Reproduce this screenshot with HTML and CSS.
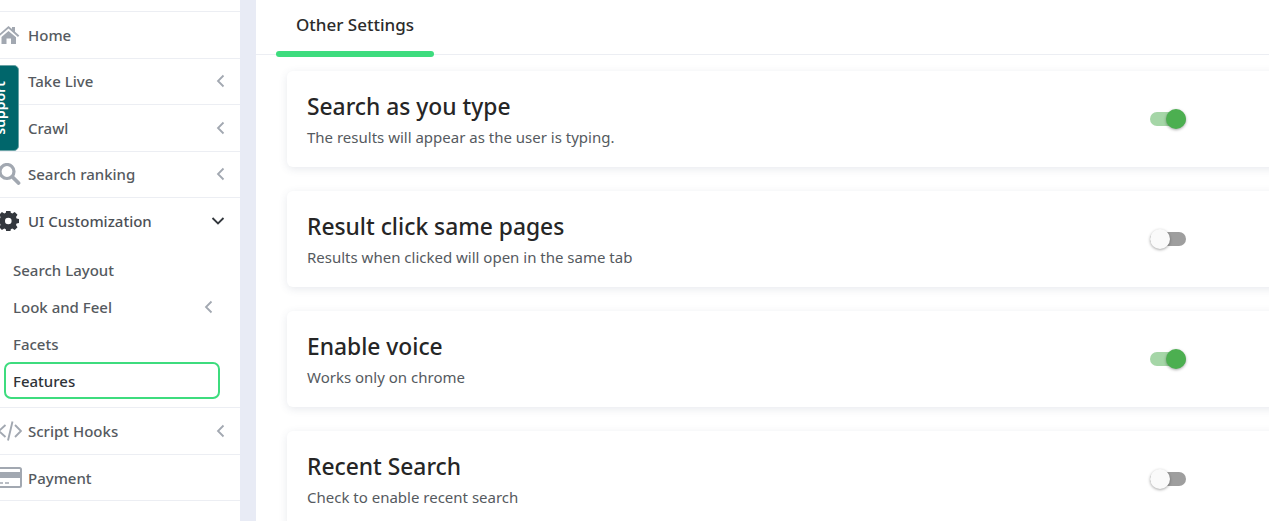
FILE: index.html
```html
<!DOCTYPE html>
<html lang="en">
<head>
<meta charset="utf-8">
<title>Other Settings</title>
<link rel="stylesheet" href="styles.css">
</head>
<body>
<div class="page">
  <aside class="sidebar">
    <a class="support"><span class="support-text">support</span></a>
    <ul class="nav">
      <li class="item"><span class="icon"><svg width="22" height="20" viewBox="0 0 22 20"><path fill="#a2a8b1" d="M-1 9.500 8.500 1 12 4V2h3v4.700l4.300 3.800-1.300 1.500-9.500-8.400L-.2 11zM1.500 12l7-6 7.500 6.300V19h-5v-5.500H6.500V19h-5z"/></svg></span><span class="label">Home</span></li>
      <li class="item"><span class="icon"></span><span class="label">Take Live</span><svg class="chev" width="10" height="14" viewBox="0 0 10 14"><path d="M7.500 1.500 2 7l5.500 5.500" fill="none" stroke="#a2a8b1" stroke-width="1.800"/></svg></li>
      <li class="item"><span class="icon"></span><span class="label">Crawl</span><svg class="chev" width="10" height="14" viewBox="0 0 10 14"><path d="M7.500 1.500 2 7l5.500 5.500" fill="none" stroke="#a2a8b1" stroke-width="1.800"/></svg></li>
      <li class="item"><span class="icon"><svg width="22" height="22" viewBox="0 0 22 22"><circle cx="7" cy="8.500" r="7" fill="none" stroke="#a2a8b1" stroke-width="3.200"/><path d="m12.500 14 6 6" stroke="#a2a8b1" stroke-width="3.800" stroke-linecap="round"/></svg></span><span class="label">Search ranking</span><svg class="chev" width="10" height="14" viewBox="0 0 10 14"><path d="M7.500 1.500 2 7l5.500 5.500" fill="none" stroke="#a2a8b1" stroke-width="1.800"/></svg></li>
      <li class="item open">
        <div class="head"><span class="icon"><svg width="22" height="20" viewBox="0 0 22 20"><path fill="#33373d" fill-rule="evenodd" d="M6.300 0h4l.5 2.800 1.500.6L14.700 2l2.800 2.800-1.500 2.300.6 1.400 2.400.5v4l-2.400.5-.6 1.400 1.500 2.300-2.800 2.800-2.400-1.400-1.500.6-.5 2.800h-4l-.5-2.800-1.500-.6-2.400 1.400-2.800-2.800 1.500-2.300-.6-1.400-2.400-.5v-4l2.400-.5.600-1.400-1.500-2.300L1.900 2l2.400 1.400 1.500-.6zM8.300 7.700a3.300 3.300 0 1 0 0 6.600 3.300 3.300 0 0 0 0-6.600z" transform="translate(0 -1)"/></svg></span><span class="label strong">UI Customization</span><svg class="chev" width="14" height="10" viewBox="0 0 14 10"><path d="M1.500 2 7 7.500 12.500 2" fill="none" stroke="#33373d" stroke-width="1.800"/></svg></div>
        <ul class="subnav">
          <li class="sub">Search Layout</li>
          <li class="sub">Look and Feel<svg class="subchev" width="10" height="14" viewBox="0 0 10 14"><path d="M7.500 1.500 2 7l5.500 5.500" fill="none" stroke="#a2a8b1" stroke-width="1.800"/></svg></li>
          <li class="sub">Facets</li>
          <li class="sub active">Features</li>
        </ul>
      </li>
      <li class="item"><span class="icon"><svg width="22" height="22" viewBox="0 0 22 22"><path d="M5.500 5-1 11l6.500 6M15 5l6 6-6 6M12.500 1.500 8 20.500" fill="none" stroke="#a2a8b1" stroke-width="1.900"/></svg></span><span class="label">Script Hooks</span><svg class="chev" width="10" height="14" viewBox="0 0 10 14"><path d="M7.500 1.500 2 7l5.500 5.500" fill="none" stroke="#a2a8b1" stroke-width="1.800"/></svg></li>
      <li class="item"><span class="icon"><svg width="22" height="21" viewBox="0 0 22 21"><rect x="-4" y="1" width="25" height="19" rx="1.500" fill="none" stroke="#a2a8b1" stroke-width="2"/><path d="M-3 5h23v6H-3z" fill="#a2a8b1"/><path d="M-1 16h4M5 16h4" stroke="#a2a8b1" stroke-width="1.500"/></svg></span><span class="label">Payment</span></li>
    </ul>
  </aside>
  <main class="main">
    <div class="tabs"><div class="tab">Other Settings</div></div>
    <div class="cards">
      <section class="card"><div class="text"><h2>Search as you type</h2><p>The results will appear as the user is typing.</p></div><div class="switch on"><span class="knob"></span></div></section>
      <section class="card"><div class="text"><h2>Result click same pages</h2><p>Results when clicked will open in the same tab</p></div><div class="switch"><span class="knob"></span></div></section>
      <section class="card"><div class="text"><h2>Enable voice</h2><p>Works only on chrome</p></div><div class="switch on"><span class="knob"></span></div></section>
      <section class="card"><div class="text"><h2>Recent Search</h2><p>Check to enable recent search</p></div><div class="switch"><span class="knob"></span></div></section>
    </div>
  </main>
</div>
</body>
</html>
```
FILE: styles.css
```css
* { box-sizing: border-box; }
html, body { margin: 0; height: 521px; overflow: hidden; }
body { font-family: "Noto Sans", "Open Sans", sans-serif; background: #e8ebf5; color: #2b2b2b; }
ul { list-style: none; margin: 0; padding: 0; }
.page { display: flex; gap: 16px; height: 521px; }
.sidebar { position: relative; width: 240px; flex: none; background: #fff; padding-top: 11px; overflow: hidden; }
.support { position: absolute; left: -17px; top: 65px; width: 36px; height: 86px; padding-right: 3px; display: flex; align-items: center; justify-content: center; background: #00666b; border: 1px solid #6aa3a6; border-radius: 5px; color: #fff; font-size: 14px; font-weight: 600; }
.support-text { writing-mode: vertical-rl; transform: rotate(180deg); line-height: 30px; }
.nav { border-top: 1px solid #eceef3; }
.item { display: flex; align-items: center; height: 46.550px; border-bottom: 1px solid #eceef3; padding-right: 14px; font-size: 15px; font-weight: 500; color: #555a60; }
.item.open { display: block; height: auto; padding-right: 0; padding-bottom: 8px; }
.head { display: flex; align-items: center; height: 46px; padding-right: 15px; }
.icon { width: 28px; flex: none; display: flex; align-items: center; }
.label { flex: 1; }
.strong { color: #4c5056; }
.subnav { padding: 7px 20px 0 4px; }
.sub { display: flex; align-items: center; justify-content: space-between; height: 37px; padding: 0 6px 0 9px; font-size: 15px; color: #555a60; }
.sub.active { border: 2px solid #3ddc7e; border-radius: 7px; color: #2f3338; padding-left: 7px; }
.main { flex: 1; min-width: 0; background: #fff; overflow: hidden; }
.tabs { height: 55px; border-bottom: 1px solid #eceef3; padding-left: 20px; }
.tab { position: relative; width: 158px; height: 54px; padding: 13px 0 0 20px; font-size: 17px; font-weight: 500; line-height: 24px; color: #2b2b2b; }
.tab::after { content: ""; position: absolute; left: 0; right: 0; bottom: -3px; height: 6px; background: #3ddc7e; border-radius: 3px; }
.cards { display: flex; flex-direction: column; gap: 24px; padding: 16px 0 0 31px; margin-right: -40px; }
.card { display: flex; align-items: center; justify-content: space-between; height: 96px; padding: 0 123px 0 20px; background: #fff; border-radius: 6px; box-shadow: 0 2px 8px rgba(60, 70, 110, .12); flex: none; }
.text { padding-top: 1px; }
.card h2 { margin: 0; font-size: 22.800px; font-weight: 500; line-height: 30px; color: #262626; }
.card p { margin: 5px 0 0; font-size: 15px; line-height: 20px; color: #555a60; }
.switch { position: relative; width: 36px; height: 14px; border-radius: 7px; background: #9e9e9e; }
.knob { position: absolute; left: 0; top: -3px; width: 20px; height: 20px; border-radius: 50%; background: #fafafa; box-shadow: 0 1px 3px rgba(0, 0, 0, .35); }
.switch.on { background: #a5d6a7; }
.switch.on .knob { left: 16px; background: #4caf50; }
```
